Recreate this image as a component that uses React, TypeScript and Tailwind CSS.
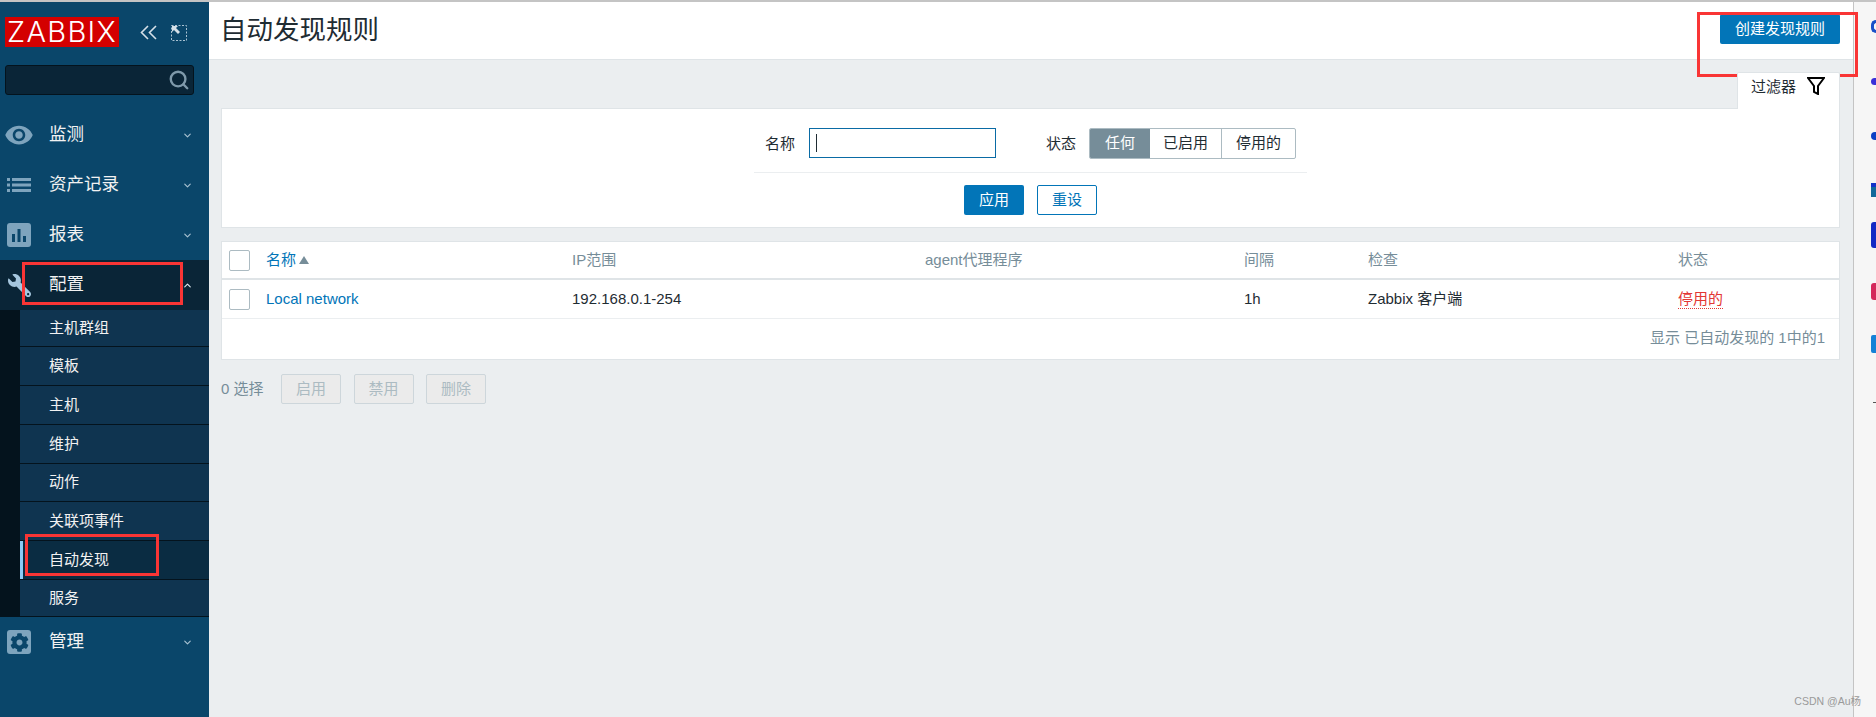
import React from 'react';
import { FaCog, FaWrench } from 'react-icons/fa';
import { MdVisibility } from 'react-icons/md';
import { ChevronDown, ChevronUp, Search } from 'lucide-react';

const SUB_ITEMS = [
  { label: '主机群组', h: 'h-[37px]' },
  { label: '模板', h: 'h-[39px]' },
  { label: '主机', h: 'h-[39px]' },
  { label: '维护', h: 'h-[39px]' },
  { label: '动作', h: 'h-[38px]' },
  { label: '关联项事件', h: 'h-[39px]' },
  { label: '自动发现', h: 'h-[39px]', active: true },
  { label: '服务', h: 'h-[37px]' },
];

function ListIcon() {
  return (
    <svg width="24" height="14" viewBox="0 0 24 14" fill="#7ea4bd">
      <rect x="0" y="0" width="3" height="3" />
      <rect x="5" y="0" width="19" height="3" />
      <rect x="0" y="5.5" width="3" height="3" />
      <rect x="5" y="5.5" width="19" height="3" />
      <rect x="0" y="11" width="3" height="3" />
      <rect x="5" y="11" width="19" height="3" />
    </svg>
  );
}

function ChartIcon() {
  return (
    <svg width="24" height="24" viewBox="0 0 24 24">
      <rect width="24" height="24" rx="3" fill="#7ea4bd" />
      <rect x="5" y="11" width="3" height="8" fill="#0a466a" />
      <rect x="10.5" y="6" width="3" height="13" fill="#0a466a" />
      <rect x="16" y="13" width="3" height="6" fill="#0a466a" />
    </svg>
  );
}

function GearIcon() {
  return (
    <div className="w-6 h-6 rounded-[3px] bg-[#7ea4bd] flex items-center justify-center">
      <FaCog className="w-[19px] h-[19px] text-[#0a466a]" />
    </div>
  );
}

function MenuItem({ icon, label, open }: { icon: React.ReactNode; label: string; open?: boolean }) {
  return (
    <div className={`h-[50px] flex items-center ${open ? 'bg-[#0a2537]' : ''}`}>
      <div className="w-[49px] pl-[6px] pr-[17px] shrink-0 flex items-center justify-center">{icon}</div>
      <span className="text-[17.5px] text-[#f2f2f2] mb-[2px]">{label}</span>
      <span className="ml-auto mr-[16px]">
        {open ? (
          <ChevronUp className="w-[11px] h-[11px] text-[#dfe8ee]" strokeWidth={2.5} />
        ) : (
          <ChevronDown className="w-[11px] h-[11px] text-[#a9c2d2]" strokeWidth={2.5} />
        )}
      </span>
    </div>
  );
}

function Sidebar() {
  return (
    <aside className="w-[209px] shrink-0 bg-[#0a466a] flex flex-col">
      <div className="h-[63px] pt-[15px] pl-[5px] flex items-start">
        <div className="w-[114px] h-[30px] bg-[#d40000] text-white text-[29px] leading-[30px] tracking-[1.3px] text-center font-[Inter,sans-serif] font-light">
          ZABBIX
        </div>
        <svg className="ml-[21px] mt-[8px]" width="18" height="15" viewBox="0 0 18 15" fill="none" stroke="#d5e0e8" strokeWidth="1.6">
          <path d="M8 1 L1.5 7.5 L8 14" />
          <path d="M16 1 L9.5 7.5 L16 14" />
        </svg>
        <svg className="ml-[13px] mt-[8px]" width="16" height="16" viewBox="0 0 16 16" fill="none" stroke="#a9c2d2">
          <rect x="0.5" y="0.5" width="15" height="15" strokeDasharray="2 1.5" />
          <path d="M1 1 H7 L5 3 L9 7 L7 9 L3 5 L1 7 Z" fill="#d5e0e8" stroke="none" />
        </svg>
      </div>
      <div className="ml-[5px] w-[189px] h-[30px] bg-[#0a2537] border border-[#04131d] rounded-[3px] flex items-center justify-end pr-[3px]">
        <Search className="w-[22px] h-[22px] text-[#7e99aa]" strokeWidth={2.6} />
      </div>
      <div className="mt-[15px]">
        <MenuItem icon={<MdVisibility className="w-[30px] h-[30px] text-[#7ea4bd] shrink-0" />} label="监测" />
        <MenuItem icon={<ListIcon />} label="资产记录" />
        <MenuItem icon={<ChartIcon />} label="报表" />
        <MenuItem icon={<FaWrench className="w-[23px] h-[23px] text-[#a5c6de] -scale-x-100" />} label="配置" open />
        <div className="bg-[#04131d] pl-[20px]">
          {SUB_ITEMS.map((item) => (
            <div
              key={item.label}
              className={`${item.h} flex items-center pl-[29px] text-[15px] text-[#f2f2f2] border-b border-[#04131d] ${
                item.active ? 'bg-[#0a2c42] relative' : 'bg-[#0f3450]'
              }`}
            >
              {item.active && <span className="absolute left-0 top-0 bottom-0 w-[3px] bg-[#8ccbf5]" />}
              {item.label}
            </div>
          ))}
        </div>
        <MenuItem icon={<GearIcon />} label="管理" />
      </div>
    </aside>
  );
}

function FilterPanel() {
  return (
    <div className="bg-white border border-[#dfe4e7] h-[120px] flex flex-col items-center pt-[19px]">
      <div className="w-[553px] h-[45px] border-b border-[#ebeef0] flex items-start text-[15px] text-[#1f2c33]">
        <span className="ml-[11px] mt-[5px]">名称</span>
        <div className="ml-[14px] w-[187px] h-[30px] border border-[#0a6ba5] flex items-center pl-[6px]">
          <span className="w-[1px] h-[18px] bg-[#1f2c33]" />
        </div>
        <span className="ml-[50px] mt-[5px]">状态</span>
        <div className="ml-[13px] h-[31px] flex border border-[#acbbc2] rounded-[2px] overflow-hidden">
          <div className="w-[60px] bg-[#768d99] text-white flex items-center justify-center">任何</div>
          <div className="w-[72px] border-r border-[#acbbc2] flex items-center justify-center">已启用</div>
          <div className="w-[73px] flex items-center justify-center">停用的</div>
        </div>
      </div>
      <div className="mt-[12px] flex gap-[13px] text-[15px]">
        <button className="w-[60px] h-[30px] bg-[#0275b8] text-white rounded-[2px]">应用</button>
        <button className="w-[60px] h-[30px] border border-[#0275b8] text-[#0275b8] rounded-[2px]">重设</button>
      </div>
    </div>
  );
}

function Checkbox() {
  return <div className="w-[21px] h-[21px] bg-white border border-[#acbbc2] rounded-[2px]" />;
}

function DiscoveryTable() {
  return (
    <div className="mt-[13px] bg-white border border-[#dfe4e7] h-[119px] text-[15px]">
      <div className="h-[38px] border-b-2 border-[#dfe4e7] flex items-center text-[#768d99]">
        <div className="w-[44px] pl-[7px] shrink-0"><Checkbox /></div>
        <div className="w-[306px] shrink-0 flex items-center gap-[3px] text-[#0275b8]">
          名称
          <svg width="10" height="8" viewBox="0 0 10 8"><path d="M5 0 L10 8 H0 Z" fill="#768d99" /></svg>
        </div>
        <div className="w-[353px] shrink-0">IP范围</div>
        <div className="w-[319px] shrink-0">agent代理程序</div>
        <div className="w-[124px] shrink-0">间隔</div>
        <div className="w-[310px] shrink-0">检查</div>
        <div>状态</div>
      </div>
      <div className="h-[39px] border-b border-[#ebeef0] flex items-center text-[#1f2c33]">
        <div className="w-[44px] pl-[7px] shrink-0"><Checkbox /></div>
        <div className="w-[306px] shrink-0 text-[#0275b8]">Local network</div>
        <div className="w-[353px] shrink-0">192.168.0.1-254</div>
        <div className="w-[319px] shrink-0" />
        <div className="w-[124px] shrink-0">1h</div>
        <div className="w-[310px] shrink-0">Zabbix 客户端</div>
        <div className="text-[#e33734] border-b border-dotted border-[#e33734] leading-[19px]">停用的</div>
      </div>
      <div className="h-[39px] flex items-center justify-end pr-[14px] text-[#768d99]">显示 已自动发现的 1中的1</div>
    </div>
  );
}

function ActionBar() {
  return (
    <div className="mt-[14px] flex items-center text-[15px] text-[#768d99]">
      <span className="w-[60px]">0 选择</span>
      <div className="flex gap-[12.5px]">
        {['启用', '禁用', '删除'].map((label) => (
          <button key={label} className="w-[60px] h-[30px] bg-[#ebebeb] border border-[#cdd6db] rounded-[2px] text-[#acbbc2]">
            {label}
          </button>
        ))}
      </div>
    </div>
  );
}

function Annotation({ className }: { className: string }) {
  return <div className={`absolute border-[3px] border-[#f93535] pointer-events-none ${className}`} />;
}

// bits of browser extension icons, cut off by the right edge of the window
function SideStrip() {
  return (
    <div className="w-[23px] shrink-0 bg-[#f6f6f6] border-l border-[#c4c4c4] overflow-hidden flex flex-col items-end">
      <div className="mt-[18px] w-[5px] h-[13px] border-l-[3px] border-y-[3px] border-[#1a50c8] rounded-l-[6px]" />
      <div className="mt-[45px] w-[5px] h-[7px] bg-[#3a2fd8] rounded-l-full" />
      <div className="mt-[47px] w-[5px] h-[8px] bg-[#0b3fc4] rounded-l-[4px]" />
      <div className="mt-[43px] w-[5px] h-[14px] bg-[#12699a] border-t-[4px] border-[#1432c8]" />
      <div className="mt-[25px] w-[5px] h-[26px] bg-[#1428c4] rounded-l-[3px]" />
      <div className="mt-[35px] w-[5px] h-[17px] bg-[#d4275a] rounded-l-[3px]" />
      <div className="mt-[35px] w-[5px] h-[18px] bg-[#1581d6] rounded-l-[2px]" />
      <div className="mt-[49px] w-[3px] h-[1px] bg-[#555]" />
    </div>
  );
}

export default function App() {
  return (
    <div className="relative w-[1876px] h-[717px] overflow-hidden bg-white font-['Liberation_Sans','Noto_Sans_CJK_SC',sans-serif]">
      <div className="h-[2px] bg-[#c4c4c4]" />
      <div className="flex h-[715px]">
        <Sidebar />
        <main className="flex-1 bg-[#ebeef0] flex flex-col">
          <header className="h-[58px] shrink-0 bg-white border-b border-[#dfe4e7] flex items-center justify-between pl-[11px] pr-[13px]">
            <h1 className="text-[26.5px] text-[#1f2c33] font-normal mt-[1px]">自动发现规则</h1>
            <button className="w-[120px] h-[30px] bg-[#0275b8] text-white text-[15px] rounded-[2px] -mt-[3px]">创建发现规则</button>
          </header>
          <div className="px-[12px] pt-[12px] pr-[13px]">
            <div className="flex justify-end -mb-[1px]">
              <div className="relative z-10 w-[103px] h-[37px] bg-white border border-b-0 border-[#dfe4e7] rounded-t-[2px] flex items-start pt-[3px] pl-[13px] gap-[11px] text-[15px] text-[#1f2c33]">
                过滤器
                <svg className="mt-[1px]" width="18" height="18" viewBox="0 0 18 18" fill="none" stroke="#000" strokeWidth="2">
                  <path d="M1 1 H17 L11 9 V17 L7 15 V9 Z" />
                </svg>
              </div>
            </div>
            <FilterPanel />
            <DiscoveryTable />
            <ActionBar />
          </div>
        </main>
        <SideStrip />
      </div>
      <Annotation className="left-[22px] top-[262px] w-[161px] h-[43px]" />
      <Annotation className="left-[25px] top-[534px] w-[134px] h-[42px]" />
      <Annotation className="left-[1697px] top-[12px] w-[161px] h-[65px]" />
      <span className="absolute right-[15px] bottom-[7px] text-[10.5px] text-[#9a9a9a]">CSDN @Au杨</span>
    </div>
  );
}
